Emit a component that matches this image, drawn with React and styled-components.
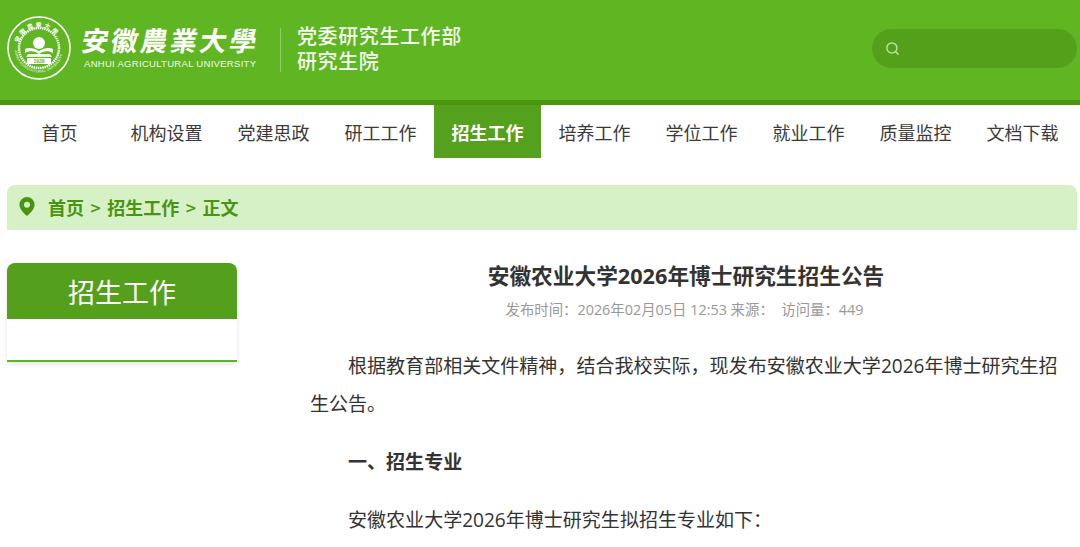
import React from "react";
import styled, { createGlobalStyle } from "styled-components";
import { Search } from "lucide-react";

const Global = createGlobalStyle`
  html, body { margin: 0; padding: 0; background: #fff; overflow: hidden; }
  body { font-family: "Open Sans", "Noto Sans CJK SC", sans-serif; }
  * { box-sizing: border-box; }
`;
const Page = styled.div`width: 1080px; height: 547px; overflow: hidden;`;
const Header = styled.header`
  height: 105px; background: #5fb622; border-bottom: 5px solid #4b960f;
  display: flex; align-items: center; padding: 0 3px 4px 7px; color: #fff;
`;
const Brand = styled.div`display: flex; align-items: center; gap: 11px;`;
const NameBlock = styled.div`display: flex; flex-direction: column; width: 176px; margin-top: -2px;`;
const Calligraphy = styled.div`
  font-family: "Noto Sans CJK TC", sans-serif; font-weight: 700; font-size: 27px; line-height: 32px;
  letter-spacing: 2.6px; margin-left: -3px; white-space: nowrap; transform: skewX(-10deg); transform-origin: left bottom;
`;
const EnName = styled.div`
  font-family: "Liberation Sans", sans-serif; font-size: 9.5px; line-height: 12px; margin: 2px 0 0 2px;
  letter-spacing: 0.3px; white-space: nowrap; color: #f2f9ea;
`;
const Divider = styled.div`width: 1px; height: 44px; background: #8fcd66; margin: 4px 16px 0 22px;`;
const Dept = styled.div`font-family: "Noto Sans CJK SC", sans-serif; font-size: 20px; line-height: 25px; font-weight: 500; letter-spacing: .6px; color: #f4faee; white-space: nowrap;`;
const SearchBox = styled.div`
  margin-left: auto; width: 205px; height: 39px; border-radius: 20px; background: #54a01b;
  display: flex; align-items: center; padding-left: 13px; color: #b6e295;
`;
const Nav = styled.nav`display: flex; padding: 0 3px 0 6px; height: 54px;`;
const NavItem = styled.a`
  width: 107px; height: 53px; display: flex; align-items: center; justify-content: center;
  font-family: "Noto Sans CJK SC", sans-serif; font-size: 18px; padding-top: 1px;
  color: ${p => (p.$active ? "#fff" : "#3a3a3a")};
  background: ${p => (p.$active ? "#55a01c" : "transparent")};
  font-weight: ${p => (p.$active ? 700 : 400)};
`;
const Crumb = styled.div`
  margin: 26px 3px 0 7px; height: 45px; background: #d6f1c6; border-radius: 8px 8px 0 0;
  display: flex; align-items: center; padding: 0 0 2px 12px; color: #4a9412; font-size: 18px; font-weight: 700;
  font-family: "Noto Sans CJK SC", sans-serif;
`;
const CrumbTrail = styled.div`display: flex; align-items: center; margin-left: 13px;`;
const Sep = styled.span`margin: 0 6.5px; font-weight: 500;`;
const Main = styled.div`display: flex; padding: 33px 0 0 7px;`;
const Side = styled.aside`width: 230px; flex: none; height: 99px; box-shadow: 0 2px 5px rgba(0,0,0,.1);`;
const SideHead = styled.div`
  height: 56px; background: #54a01c; border-radius: 8px 8px 0 0; color: #fff; font-size: 27px;
  font-family: "Noto Sans CJK SC", sans-serif; display: flex; align-items: center; justify-content: center;
`;
const SideBody = styled.div`height: 43px; border-bottom: 2px solid #5fb02a;`;
const Article = styled.article`margin-left: 73px; width: 752px; color: #333;`;
const Title = styled.h1`margin: -9px 0 0; font-size: 21.7px; line-height: 44px; font-weight: 700; text-align: center; color: #333;`;
const Meta = styled.div`margin: 1px 0 0 -3px; font-size: 14.4px; line-height: 22px; color: #999; text-align: center; white-space: pre;`;
const Para = styled.p`
  margin: ${p => p.$top || 20}px 0 0; font-size: 19.05px; line-height: 38px; text-indent: 38px;
  font-weight: ${p => (p.$bold ? 700 : 400)}; color: #333;
`;

const Seal = () => (
  <svg width="64" height="64" viewBox="0 0 64 64" fill="none">
    <defs>
      <path id="arcTop" d="M11 32a21 21 0 0 1 42 0" />
      <path id="arcBot" d="M7.5 32a24.5 24.5 0 0 0 49 0" />
    </defs>
    <circle cx="32" cy="32" r="31" stroke="#fff" strokeWidth="1.6" />
    <circle cx="32" cy="32" r="20" stroke="#fff" strokeWidth="2.4" strokeDasharray="1.5 .7" />
    <text fontSize="6" fill="#fff" fontWeight="700" fontFamily="Noto Sans CJK TC, sans-serif" letterSpacing="2">
      <textPath href="#arcTop" startOffset="8%">安徽農業大學</textPath>
    </text>
    <text fontSize="3.6" fill="#fff" fontFamily="Liberation Sans, sans-serif" letterSpacing=".2">
      <textPath href="#arcBot" startOffset="3%">ANHUI AGRICULTURAL UNIVERSITY</textPath>
    </text>
    <circle cx="32" cy="27" r="6" fill="#fff" />
    <path d="M18 37c5-3 10-2 14 1 4-3 9-4 14-1v-4c-4-2-9-1-14 2-5-3-10-4-14-2z" fill="#fff" />
    <path d="M21 38h22l2 3H19z" fill="#fff" opacity=".9" />
    <rect x="20" y="42" width="24" height="6" rx="1" fill="#fff" />
    <text x="32" y="47" fontSize="5" fontWeight="700" textAnchor="middle" fill="#5fb622" fontFamily="Liberation Sans, sans-serif">1928</text>
  </svg>
);

const Pin = () => (
  <svg width="16" height="19" viewBox="0 0 16 19">
    <path fillRule="evenodd" fill="#4a9412" d="M8 0a7.6 7.6 0 0 1 7.6 7.6C15.6 12.4 10.6 17 8 19 5.4 17 .4 12.4.4 7.6A7.6 7.6 0 0 1 8 0zm0 4.7a3 3 0 1 0 0 6 3 3 0 0 0 0-6z" />
  </svg>
);

const items = ["首页", "机构设置", "党建思政", "研工工作", "招生工作", "培养工作", "学位工作", "就业工作", "质量监控", "文档下载"];

export default function App() {
  return (
    <Page>
      <Global />
      <Header>
        <Brand>
          <Seal />
          <NameBlock>
            <Calligraphy>安徽農業大學</Calligraphy>
            <EnName>ANHUI AGRICULTURAL UNIVERSITY</EnName>
          </NameBlock>
        </Brand>
        <Divider />
        <Dept>党委研究生工作部<br />研究生院</Dept>
        <SearchBox><Search size={15} strokeWidth={2.4} /></SearchBox>
      </Header>
      <Nav>
        {items.map(t => <NavItem key={t} $active={t === "招生工作"}>{t}</NavItem>)}
      </Nav>
      <Crumb>
        <Pin />
        <CrumbTrail>首页<Sep>&gt;</Sep>招生工作<Sep>&gt;</Sep>正文</CrumbTrail>
      </Crumb>
      <Main>
        <Side>
          <SideHead>招生工作</SideHead>
          <SideBody />
        </Side>
        <Article>
          <Title>安徽农业大学2026年博士研究生招生公告</Title>
          <Meta>发布时间：2026年02月05日 12:53 来源：  访问量：449</Meta>
          <Para $top={26}>根据教育部相关文件精神，结合我校实际，现发布安徽农业大学2026年博士研究生招生公告。</Para>
          <Para $bold>一、招生专业</Para>
          <Para>安徽农业大学2026年博士研究生拟招生专业如下：</Para>
        </Article>
      </Main>
    </Page>
  );
}
